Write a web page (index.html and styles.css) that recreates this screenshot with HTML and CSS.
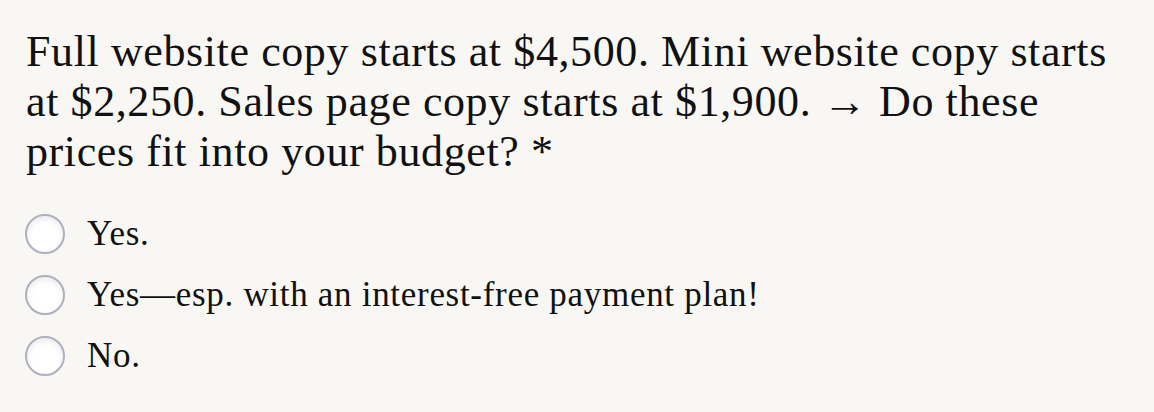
FILE: index.html
```html
<!DOCTYPE html>
<html>
<head>
<meta charset="utf-8">
<link rel="stylesheet" href="styles.css">
</head>
<body>
<div class="field">
  <div class="label">Full website copy starts at $4,500. Mini website copy starts at $2,250. Sales page copy starts at $1,900. → Do these prices fit into your budget? *</div>
  <div class="options">
    <label class="option"><span class="radio"></span><span class="text">Yes.</span></label>
    <label class="option"><span class="radio"></span><span class="text">Yes—esp. with an interest-free payment plan!</span></label>
    <label class="option"><span class="radio"></span><span class="text">No.</span></label>
  </div>
</div>
</body>
</html>
```
FILE: styles.css
```css
html, body {
  margin: 0;
  background: #f8f7f4;
}
body {
  font-family: "Liberation Serif", serif;
  color: #111;
}
.field {
  padding: 27px 20px 0 26px;
}
.label {
  font-size: 44px;
  line-height: 50px;
  letter-spacing: 0.6px;
}
.options {
  display: flex;
  flex-direction: column;
  gap: 20px;
  margin-top: 36px;
}
.option {
  display: flex;
  align-items: center;
  gap: 22px;
  height: 41px;
  margin-left: -1px;
}
.radio {
  width: 36px;
  height: 36px;
  border: 2px solid #adb0bd;
  border-radius: 50%;
  background: #ffffff;
  box-shadow: inset 0 3px 6px rgba(0, 0, 0, 0.08);
  flex: none;
}
.text {
  font-size: 35px;
  line-height: 41px;
  letter-spacing: 0.7px;
}
```
